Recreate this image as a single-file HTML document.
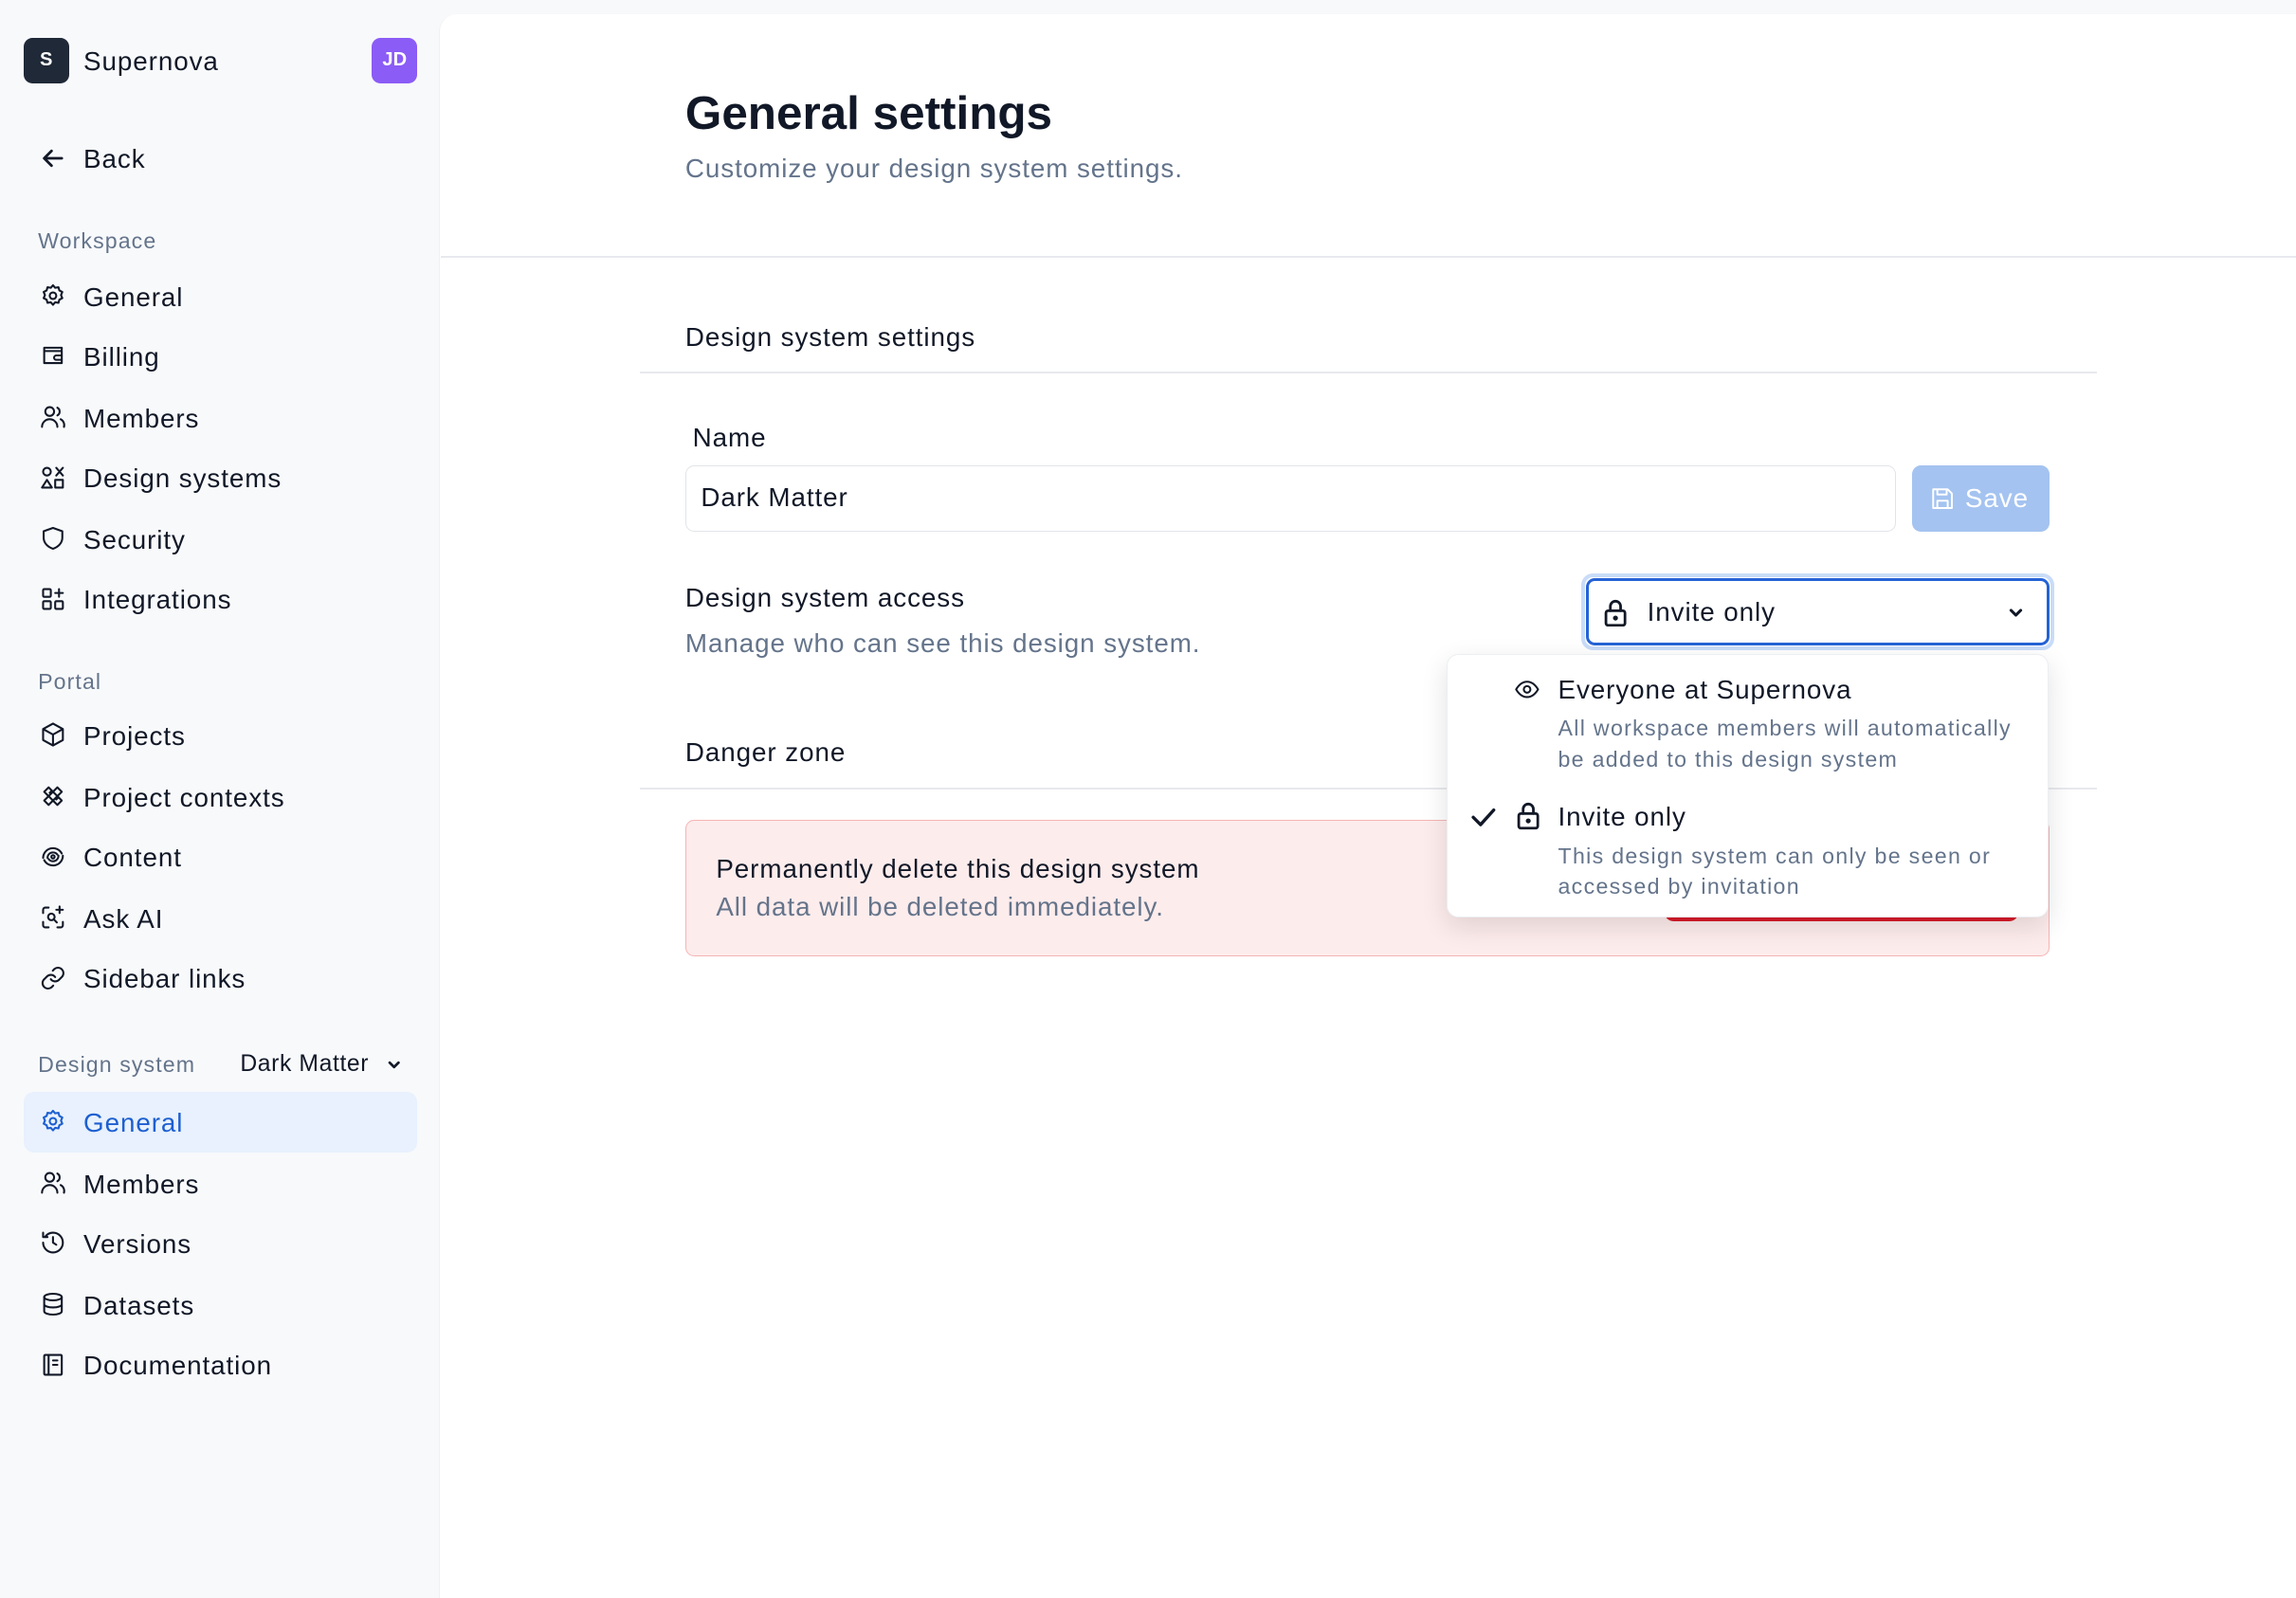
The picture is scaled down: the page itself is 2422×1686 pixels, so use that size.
<!DOCTYPE html>
<html><head><meta charset="utf-8"><style>
*{box-sizing:border-box;margin:0;padding:0}
html,body{width:2422px;height:1686px;overflow:hidden;background:#f8f9fb}
#w{zoom:1.54464;width:1568px;height:1092px;position:relative;font-family:"Liberation Sans",sans-serif;color:#111827;letter-spacing:.6px}
.a{position:absolute;white-space:nowrap}
.nav{position:absolute;left:57px;font-size:18px;line-height:22px;transform:translateY(-11px)}
.ic{position:absolute;left:27px;width:18px;height:18px;transform:translateY(-9px)}
.lbl{position:absolute;left:26px;font-size:15px;color:#64748b;transform:translateY(-9px);letter-spacing:.7px}
svg{fill:none;stroke:#111827;stroke-width:1.8;stroke-linecap:round;stroke-linejoin:round}
.mu{color:#64748b}
.sm{font-size:15px;letter-spacing:.85px}
</style></head><body><div id="w">
<div class="a" style="left:300px;top:10px;width:1268px;height:1082px;background:#fff;border-top-left-radius:12px;border-left:1px solid #f0f1f4"></div>
<!-- sidebar -->
<div class="a" style="left:16px;top:26px;width:31px;height:31px;background:#1f2937;border-radius:6px;color:#fff;font-size:13px;font-weight:bold;text-align:center;line-height:31px;letter-spacing:0">S</div>
<div class="nav" style="top:42px">Supernova</div>
<div class="a" style="left:254px;top:26px;width:31px;height:31px;background:#8b5cf6;border-radius:6px;color:#fff;font-size:13px;font-weight:bold;text-align:center;line-height:31px;letter-spacing:0">JD</div>
<svg class="ic" style="top:108px" viewBox="0 0 18 18"><path d="M15 9H3M8 4L3 9l5 5"/></svg><div class="nav" style="top:109px">Back</div>
<div class="lbl" style="top:165px">Workspace</div>
<svg class="ic" style="top:202px" viewBox="0 0 24 24"><circle cx="12" cy="12" r="3"/><path d="M12 2.5l2 2.3 3-.5.8 2.9 2.7 1.4-1.2 2.8 1.2 2.8-2.7 1.4-.8 2.9-3-.5-2 2.3-2-2.3-3 .5-.8-2.9-2.7-1.4 1.2-2.8-1.2-2.8 2.7-1.4.8-2.9 3 .5z"/></svg><div class="nav" style="top:203px">General</div>
<svg class="ic" style="top:243px" viewBox="0 0 24 24"><path d="M20 7V5H4v14h16v-3M4 8h16v8h-5a2 2 0 010-4h5"/></svg><div class="nav" style="top:244px">Billing</div>
<svg class="ic" style="top:285px" viewBox="0 0 24 24"><circle cx="9" cy="7" r="4"/><path d="M2 21a7 7 0 0114 0M16 3.5a4 4 0 010 7M19 14a6 6 0 013 7"/></svg><div class="nav" style="top:286px">Members</div>
<svg class="ic" style="top:326px" viewBox="0 0 24 24"><circle cx="6.5" cy="6.5" r="3.5"/><path d="M15 3l6 7M21 3l-6 7M6.5 14L2 21h9zM14 14h7v7h-7z"/></svg><div class="nav" style="top:327px">Design systems</div>
<svg class="ic" style="top:368px" viewBox="0 0 24 24"><path d="M12 2.5l8.5 3v6c0 5-4 8.5-8.5 10-4.5-1.5-8.5-5-8.5-10v-6z"/></svg><div class="nav" style="top:369px">Security</div>
<svg class="ic" style="top:409px" viewBox="0 0 24 24"><rect x="3" y="3" width="7" height="7" rx="1"/><rect x="3" y="14" width="7" height="7" rx="1"/><rect x="14" y="14" width="7" height="7" rx="1"/><path d="M17.5 3v7M14 6.5h7"/></svg><div class="nav" style="top:410px">Integrations</div>
<div class="lbl" style="top:466px">Portal</div>
<svg class="ic" style="top:502px" viewBox="0 0 24 24"><path d="M12 2l9 5v10l-9 5-9-5V7zM3 7l9 5 9-5M12 12v10"/></svg><div class="nav" style="top:503px">Projects</div>
<svg class="ic" style="top:544px" viewBox="0 0 24 24"><path d="M4 8l4-4 12 12-4 4zM16 4l4 4L8 20l-4-4zM9 9l2-2M15 15l2-2"/></svg><div class="nav" style="top:545px">Project contexts</div>
<svg class="ic" style="top:585px" viewBox="0 0 24 24"><path d="M3 13a9 9 0 0117-4M21 11a9 9 0 01-17 4M7 13a5 5 0 019-3M17 11a5 5 0 01-9 3"/><circle cx="12" cy="12" r="1.5"/></svg><div class="nav" style="top:586px">Content</div>
<svg class="ic" style="top:627px" viewBox="0 0 24 24"><path d="M3 8V5a2 2 0 012-2h3M3 16v3a2 2 0 002 2h3M21 16v3a2 2 0 01-2 2h-3M18 2v6M15 5h6"/><circle cx="10.5" cy="11.5" r="3"/><path d="M13 14l2.5 2.5"/></svg><div class="nav" style="top:628px">Ask AI</div>
<svg class="ic" style="top:668px" viewBox="0 0 24 24"><path d="M10 13a5 5 0 007.5.5l3-3a5 5 0 00-7-7l-1.7 1.7M14 11a5 5 0 00-7.5-.5l-3 3a5 5 0 007 7l1.7-1.7"/></svg><div class="nav" style="top:669px">Sidebar links</div>
<div class="lbl" style="top:728px">Design system</div>
<div class="a" style="left:164px;top:718px;font-size:16px;letter-spacing:.4px">Dark Matter</div>
<svg class="a" style="left:264px;top:722px;width:10px;height:10px" viewBox="0 0 10 10"><path d="M2 4l3 3 3-3"/></svg>
<div class="a" style="left:16px;top:746px;width:269px;height:41px;background:#e8f1fd;border-radius:7px"></div>
<svg class="ic" style="top:766px;stroke:#1d5fd1" viewBox="0 0 24 24"><circle cx="12" cy="12" r="3"/><path d="M12 2.5l2 2.3 3-.5.8 2.9 2.7 1.4-1.2 2.8 1.2 2.8-2.7 1.4-.8 2.9-3-.5-2 2.3-2-2.3-3 .5-.8-2.9-2.7-1.4 1.2-2.8-1.2-2.8 2.7-1.4.8-2.9 3 .5z"/></svg><div class="nav" style="top:767px;color:#1d5fd1">General</div>
<svg class="ic" style="top:808px" viewBox="0 0 24 24"><circle cx="9" cy="7" r="4"/><path d="M2 21a7 7 0 0114 0M16 3.5a4 4 0 010 7M19 14a6 6 0 013 7"/></svg><div class="nav" style="top:809px">Members</div>
<svg class="ic" style="top:849px" viewBox="0 0 24 24"><path d="M3 12a9 9 0 109-9 9 9 0 00-7 3.5M3 3v4h4M12 7v5l3 2"/></svg><div class="nav" style="top:850px">Versions</div>
<svg class="ic" style="top:891px" viewBox="0 0 24 24"><ellipse cx="12" cy="5.5" rx="8" ry="3"/><path d="M4 5.5v13c0 1.7 3.6 3 8 3s8-1.3 8-3v-13M4 12c0 1.7 3.6 3 8 3s8-1.3 8-3"/></svg><div class="nav" style="top:892px">Datasets</div>
<svg class="ic" style="top:932px" viewBox="0 0 24 24"><rect x="4" y="3" width="16" height="18" rx="1"/><path d="M8 3v18M12 8h4M12 12h4"/></svg><div class="nav" style="top:933px">Documentation</div>
<!-- main -->
<div class="a" style="left:468px;top:59px;font-size:32px;font-weight:bold;letter-spacing:0">General settings</div>
<div class="a mu" style="left:468px;top:105px;font-size:18px">Customize your design system settings.</div>
<div class="a" style="left:301px;top:175px;width:1267px;height:1px;background:#e8e9ee"></div>
<div class="a" style="left:468px;top:220px;font-size:18px">Design system settings</div>
<div class="a" style="left:437px;top:254px;width:995px;height:1px;background:#e8e9ee"></div>
<div class="a" style="left:473px;top:289px;font-size:18px">Name</div>
<div class="a" style="left:468px;top:318px;width:827px;height:45px;border:1px solid #e2e4e9;border-radius:6px;font-size:18px;padding:11px 0 0 10px">Dark Matter</div>
<div class="a" style="left:1306px;top:318px;width:94px;height:45px;background:#a4c3f0;border-radius:6px;color:#fff;font-size:18px;line-height:45px;padding-left:36px">Save</div>
<svg class="a" style="left:1318px;top:332px;width:17px;height:17px;stroke:#fff" viewBox="0 0 24 24"><path d="M4 3h13l4 4v14H3V3zM7 3v5h9V3M7 21v-7h10v7"/></svg>
<div class="a" style="left:468px;top:398px;font-size:18px">Design system access</div>
<div class="a mu" style="left:468px;top:429px;font-size:18px">Manage who can see this design system.</div>
<div class="a" style="left:1080px;top:392px;width:323px;height:52px;border:3px solid #c9dcf8;border-radius:8px"></div>
<div class="a" style="left:1083px;top:395px;width:317px;height:46px;border:2px solid #2563d6;border-radius:6px;background:#fff;font-size:18px;padding:11px 0 0 40px">Invite only</div>
<svg class="a" style="left:1095px;top:409px;width:17px;height:19px" viewBox="0 0 17 19"><rect x="2" y="8" width="13" height="10" rx="1.5"/><path d="M5 8V5a3.5 3.5 0 017 0v3"/><circle cx="8.5" cy="13" r=".8" fill="#111"/></svg>
<svg class="a" style="left:1371px;top:413px;width:11px;height:11px" viewBox="0 0 10 10"><path d="M2 3.5l3 3 3-3"/></svg>
<div class="a" style="left:468px;top:504px;font-size:18px">Danger zone</div>
<div class="a" style="left:437px;top:538px;width:995px;height:1px;background:#e8e9ee"></div>
<div class="a" style="left:468px;top:560px;width:932px;height:93px;background:#fdecec;border:1px solid #f6b4b4;border-radius:6px"></div>
<div class="a" style="left:489px;top:583px;font-size:18px">Permanently delete this design system</div>
<div class="a mu" style="left:489px;top:609px;font-size:18px">All data will be deleted immediately.</div>
<div class="a" style="left:1137px;top:580px;width:241px;height:49px;background:#d81b2a;border-radius:6px"></div>
<!-- dropdown -->
<div class="a" style="left:988px;top:447px;width:411px;height:180px;background:#fff;border:1px solid #eceef2;border-radius:8px;box-shadow:0 6px 18px rgba(0,0,0,.12)"></div>
<svg class="a" style="left:1034px;top:463px;width:18px;height:16px" viewBox="0 0 24 20"><path d="M2 10c3-5 6.5-7 10-7s7 2 10 7c-3 5-6.5 7-10 7S5 15 2 10z"/><circle cx="12" cy="10" r="3"/></svg>
<div class="a" style="left:1064px;top:461px;font-size:18px">Everyone at Supernova</div>
<div class="a mu sm" style="left:1064px;top:487px;line-height:21px">All workspace members will automatically<br>be added to this design system</div>
<svg class="a" style="left:1004px;top:550px;width:18px;height:16px;stroke-width:2.2" viewBox="0 0 18 16"><path d="M2 8l5 5 9-10"/></svg>
<svg class="a" style="left:1035px;top:548px;width:17px;height:19px" viewBox="0 0 17 19"><rect x="2" y="8" width="13" height="10" rx="1.5"/><path d="M5 8V5a3.5 3.5 0 017 0v3"/><circle cx="8.5" cy="13" r=".8" fill="#111"/></svg>
<div class="a" style="left:1064px;top:548px;font-size:18px">Invite only</div>
<div class="a mu sm" style="left:1064px;top:574px;line-height:21px">This design system can only be seen or<br>accessed by invitation</div>
</div></body></html>
